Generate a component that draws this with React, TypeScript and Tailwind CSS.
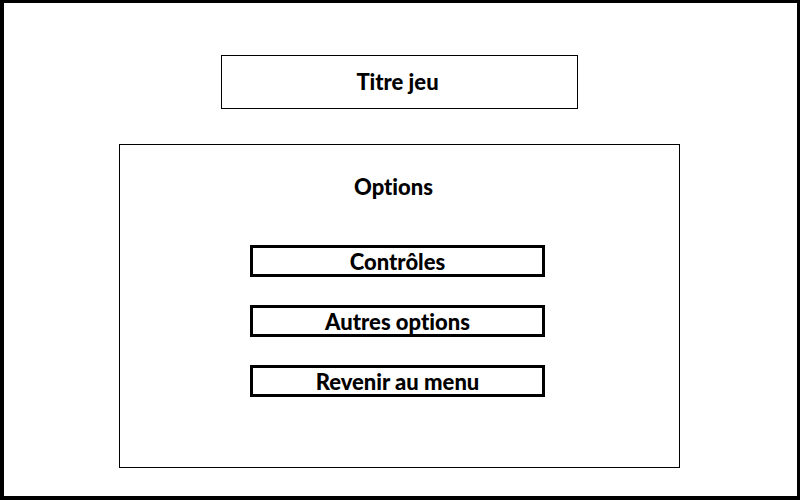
import React from "react";

const entries = ["Contrôles", "Autres options", "Revenir au menu"];

export default function App() {
  return (
    <main className="flex min-h-screen flex-col items-center border-4 border-t-3 border-r-3 border-black bg-white pt-13 pr-[18px] pb-7 pl-4 font-['Lato','Liberation_Sans',sans-serif] text-[22px] leading-7 font-black text-black [font-variant-ligatures:none]">
      <header className="flex h-[54px] w-full max-w-[357px] items-center justify-center border border-black pr-1">
        <h1>Titre jeu</h1>
      </header>
      <section
        aria-labelledby="options-title"
        className="mt-[35px] flex w-full max-w-[561px] flex-1 flex-col items-center border border-black pt-7 pr-1"
      >
        <h2 id="options-title" className="pr-2">
          Options
        </h2>
        <nav className="mt-11 mb-8 flex w-full max-w-[295px] flex-col gap-7">
          {entries.map((entry) => (
            <button
              key={entry}
              type="button"
              className="flex h-8 w-full items-center justify-center border-3 border-black bg-white pt-0.5"
            >
              {entry}
            </button>
          ))}
        </nav>
      </section>
    </main>
  );
}
